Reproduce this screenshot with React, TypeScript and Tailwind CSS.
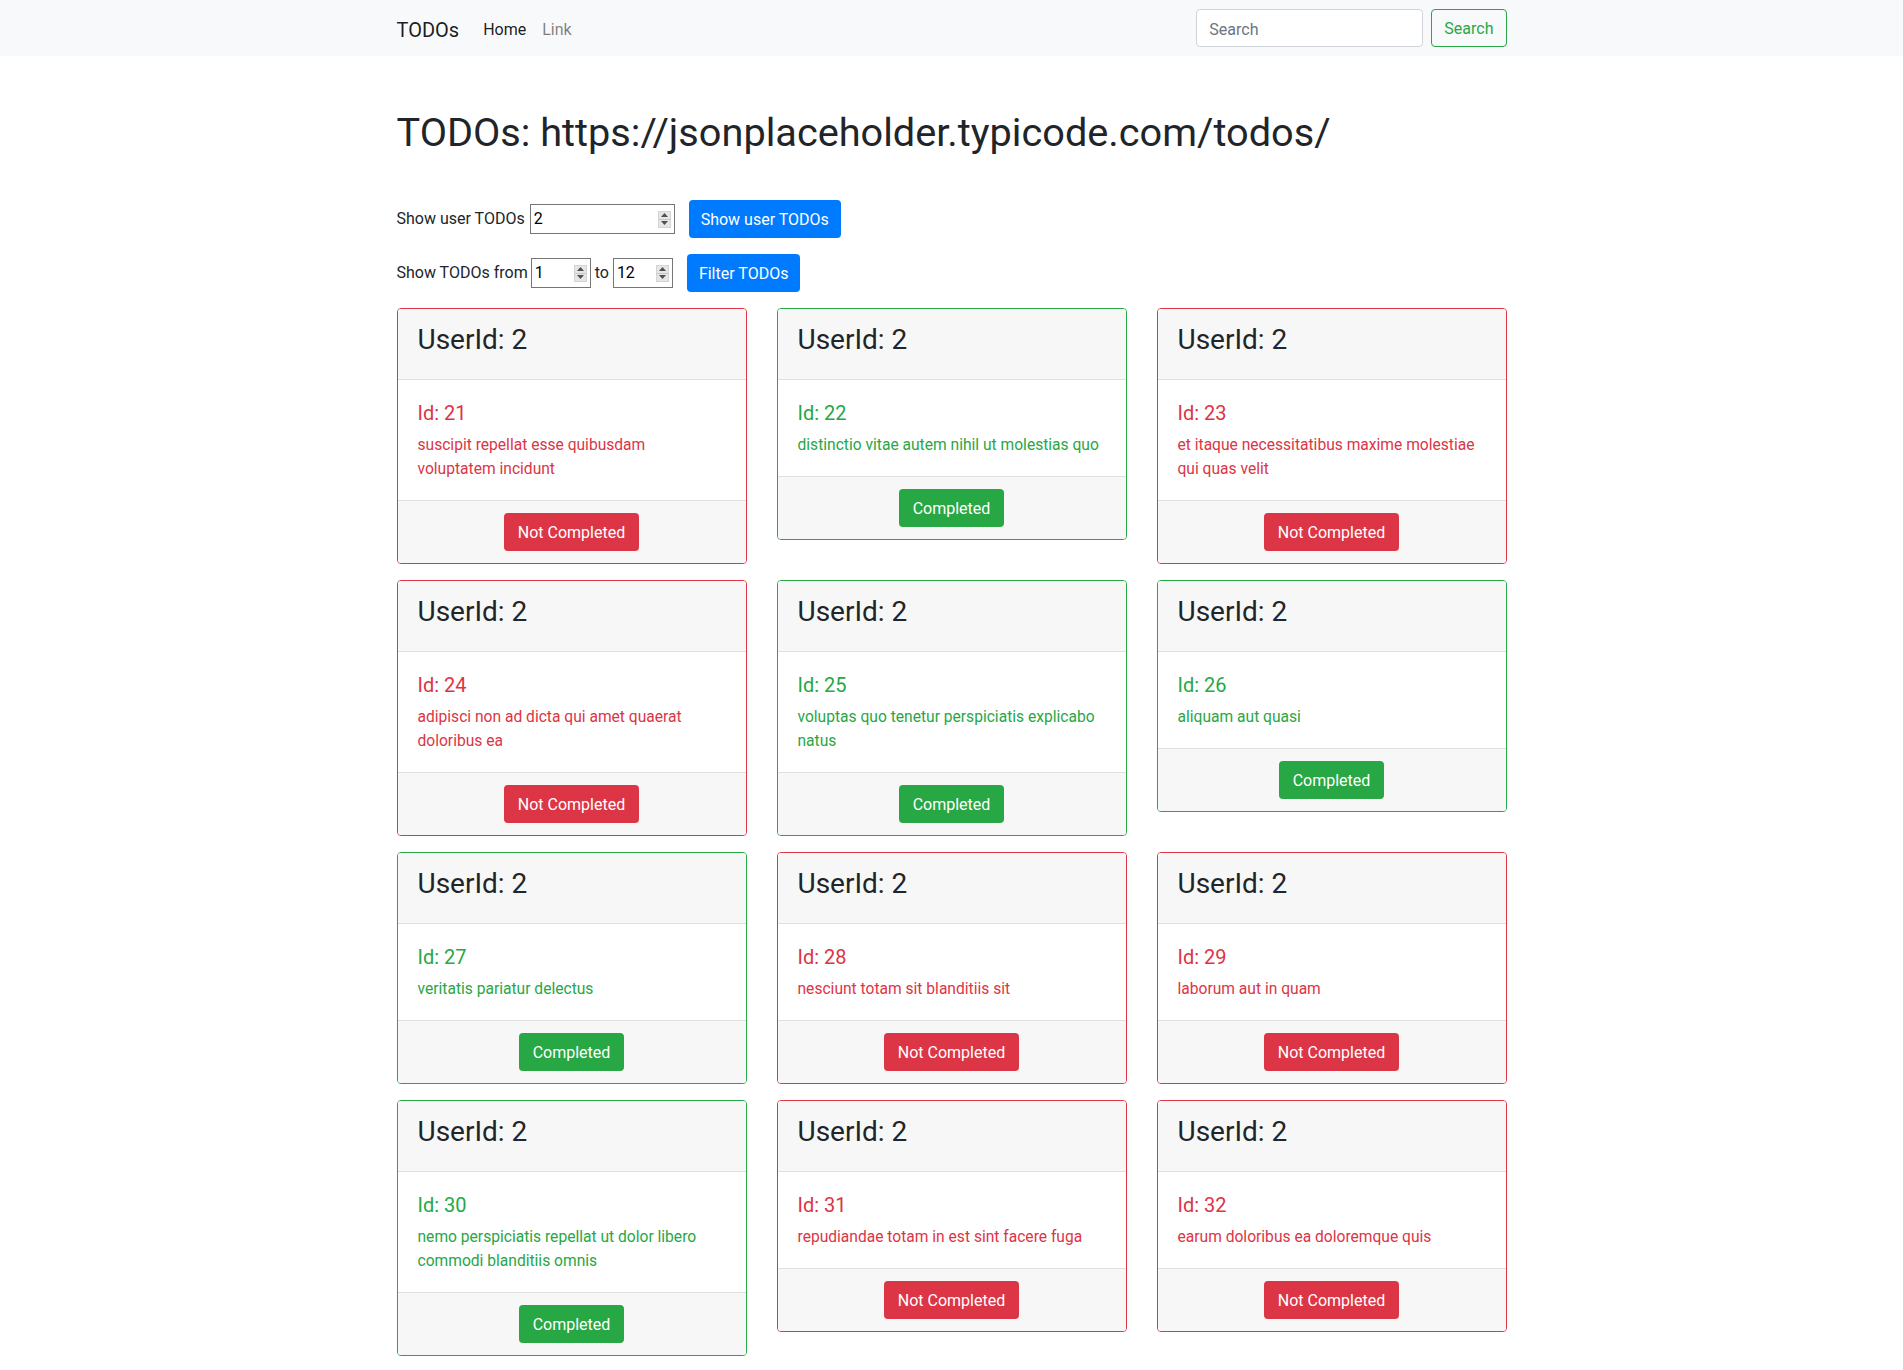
import { useState } from "react"

type Todo = {
  userId: number
  id: number
  title: string
  completed: boolean
}

const todos: Todo[] = [
  { userId: 2, id: 21, title: "suscipit repellat esse quibusdam voluptatem incidunt", completed: false },
  { userId: 2, id: 22, title: "distinctio vitae autem nihil ut molestias quo", completed: true },
  { userId: 2, id: 23, title: "et itaque necessitatibus maxime molestiae qui quas velit", completed: false },
  { userId: 2, id: 24, title: "adipisci non ad dicta qui amet quaerat doloribus ea", completed: false },
  { userId: 2, id: 25, title: "voluptas quo tenetur perspiciatis explicabo natus", completed: true },
  { userId: 2, id: 26, title: "aliquam aut quasi", completed: true },
  { userId: 2, id: 27, title: "veritatis pariatur delectus", completed: true },
  { userId: 2, id: 28, title: "nesciunt totam sit blanditiis sit", completed: false },
  { userId: 2, id: 29, title: "laborum aut in quam", completed: false },
  { userId: 2, id: 30, title: "nemo perspiciatis repellat ut dolor libero commodi blanditiis omnis", completed: true },
  { userId: 2, id: 31, title: "repudiandae totam in est sint facere fuga", completed: false },
  { userId: 2, id: 32, title: "earum doloribus ea doloremque quis", completed: false },
]

function Spinner() {
  return (
    <span className="flex flex-col w-[13px] h-[17px] bg-[#e6e6e6] border border-[#d4d4d4] shrink-0">
      <span className="flex-1 flex items-center justify-center border-b border-[#c8c8c8]">
        <svg width="7" height="4" viewBox="0 0 7 4">
          <path d="M3.5 0 L7 4 L0 4 Z" fill="#505050" />
        </svg>
      </span>
      <span className="flex-1 flex items-center justify-center">
        <svg width="7" height="4" viewBox="0 0 7 4">
          <path d="M0 0 L7 0 L3.5 4 Z" fill="#505050" />
        </svg>
      </span>
    </span>
  )
}

function NumberInput({ value, onChange, width }: { value: string; onChange: (v: string) => void; width: string }) {
  return (
    <span className={`flex items-center h-[30px] border border-[#767676] bg-white pl-[3px] pr-[3px] ${width}`}>
      <input
        type="text"
        value={value}
        onChange={(e) => onChange(e.target.value)}
        className="flex-1 min-w-0 bg-transparent outline-none text-[16px] leading-6 text-black"
      />
      <Spinner />
    </span>
  )
}

function TodoCard({ todo }: { todo: Todo }) {
  const border = todo.completed ? "border-[#28a745]" : "border-[#dc3545]"
  const text = todo.completed ? "text-[#28a745]" : "text-[#dc3545]"
  const btn = todo.completed ? "bg-[#28a745]" : "bg-[#dc3545]"

  return (
    <div className={`border rounded-[4px] overflow-hidden ${border}`}>
      <div className="bg-[#f7f7f7] border-b border-[#dfdfdf] px-5 pt-[14px] pb-[22px]">
        <h3 className="text-[28px] leading-[34px] text-[#212529]">UserId: {todo.userId}</h3>
      </div>
      <div className={`bg-white px-5 pt-[21px] pb-[19px] ${text}`}>
        <h5 className="text-[20px] leading-6 mb-2">Id: {todo.id}</h5>
        <p className="text-[15.6px] leading-6">{todo.title}</p>
      </div>
      <div className="bg-[#f7f7f7] border-t border-[#dfdfdf] py-3 flex justify-center">
        <button className={`${btn} text-white text-[16px] leading-6 px-[14px] pt-[8px] pb-[6px] rounded-[4px]`}>
          {todo.completed ? "Completed" : "Not Completed"}
        </button>
      </div>
    </div>
  )
}

export default function App() {
  const [userId, setUserId] = useState("2")
  const [from, setFrom] = useState("1")
  const [to, setTo] = useState("12")
  const [search, setSearch] = useState("")

  return (
    <div className="min-h-screen bg-white text-[#212529] font-['Roboto','Liberation_Sans',sans-serif]">
      <nav className="bg-[#f8f9fa] h-[56px]">
        <div className="w-[1140px] mx-auto px-[15px] h-full flex items-center">
          <span className="text-[20px] leading-[30px] text-black/90 mr-4 pt-[3px]">TODOs</span>
          <a className="px-2 text-[16px] text-black/90 pt-[3px]">Home</a>
          <a className="px-2 text-[16px] text-black/50 pt-[3px]">Link</a>
          <form className="ml-auto flex items-center gap-2" onSubmit={(e) => e.preventDefault()}>
            <input
              type="text"
              value={search}
              onChange={(e) => setSearch(e.target.value)}
              placeholder="Search"
              className="w-[227px] h-[38px] px-3 pt-[2px] border border-[#ced4da] rounded-[4px] bg-white text-[16px] placeholder:text-[#6c757d] outline-none"
            />
            <button className="h-[38px] px-3 pt-[2px] border border-[#28a745] text-[#28a745] rounded-[4px] text-[16px]">
              Search
            </button>
          </form>
        </div>
      </nav>

      <main className="w-[1140px] mx-auto px-[15px] pb-4">
        <h1 className="text-[39.7px] leading-[48px] mt-[53px] mb-[43px]">TODOs: https://jsonplaceholder.typicode.com/todos/</h1>

        <div className="flex flex-col gap-4">
          <div className="flex items-center h-[38px] text-[16px]">
            <span className="mr-[5px]">Show user TODOs</span>
            <NumberInput value={userId} onChange={setUserId} width="w-[145px]" />
            <button className="ml-[14px] h-[38px] px-3 pt-[2px] bg-[#007bff] text-white rounded-[4px]">Show user TODOs</button>
          </div>

          <div className="flex items-center h-[38px] text-[16px]">
            <span className="mr-[3px]">Show TODOs from</span>
            <NumberInput value={from} onChange={setFrom} width="w-[60px]" />
            <span className="mx-[4px]">to</span>
            <NumberInput value={to} onChange={setTo} width="w-[60px]" />
            <button className="ml-[14px] h-[38px] px-3 pt-[2px] bg-[#007bff] text-white rounded-[4px]">Filter TODOs</button>
          </div>

          <div className="grid grid-cols-[350px_350px_350px] gap-x-[30px] gap-y-4 items-start">
            {todos.map((todo) => (
              <TodoCard key={todo.id} todo={todo} />
            ))}
          </div>
        </div>
      </main>
    </div>
  )
}
